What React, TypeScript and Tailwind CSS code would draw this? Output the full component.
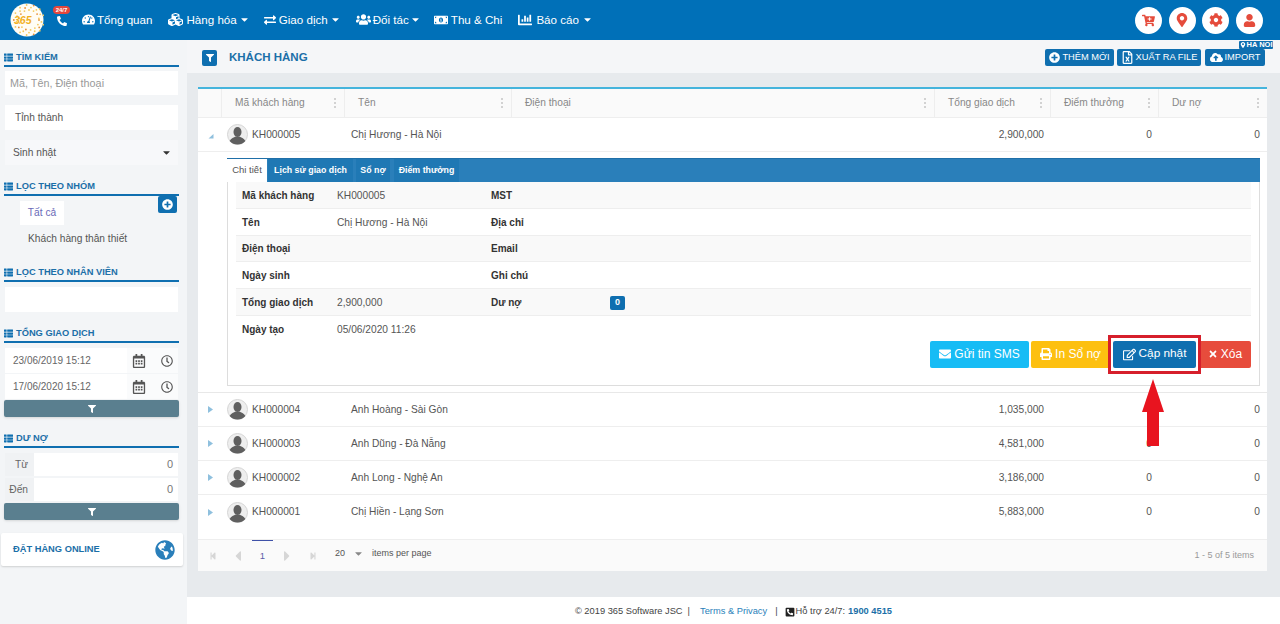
import React from 'react';
import {
  FaTachometerAlt, FaCubes, FaExchangeAlt, FaUsers, FaMoneyBillAlt, FaChartBar, FaCaretDown, FaPhoneAlt,
  FaCartPlus, FaMapMarkerAlt, FaCog, FaUser, FaFilter, FaThList, FaPlusCircle, FaRegFileExcel, FaCloudUploadAlt,
  FaRegCalendarAlt, FaRegClock, FaEnvelope, FaPrint, FaRegEdit, FaTimes, FaGlobeAmericas, FaStepBackward,
  FaCaretLeft, FaCaretRight, FaStepForward, FaPhoneSquareAlt,
} from 'react-icons/fa';

const navItems = [
  { icon: <FaTachometerAlt className="text-[13px]" />, label: 'Tổng quan', caret: false, cls: 'ml-0 gap-[2px]' },
  { icon: <FaCubes className="text-[15px]" />, label: 'Hàng hóa', caret: true, cls: 'ml-[16px] gap-[3px]' },
  { icon: <FaExchangeAlt className="text-[12px]" />, label: 'Giao dịch', caret: true, cls: 'ml-[14px] gap-[3px]' },
  { icon: <FaUsers className="text-[15px]" />, label: 'Đối tác', caret: true, cls: 'ml-[15px] gap-[2px]' },
  { icon: <FaMoneyBillAlt className="text-[14px]" />, label: 'Thu & Chi', caret: false, cls: 'ml-[13px] gap-[3px]' },
  { icon: <FaChartBar className="text-[14px]" />, label: 'Báo cáo', caret: true, cls: 'ml-[16px] gap-[4px]' },
];

const customers = [
  { code: 'KH000004', name: 'Anh Hoàng - Sài Gòn', total: '1,035,000' },
  { code: 'KH000003', name: 'Anh Dũng - Đà Nẵng', total: '4,581,000' },
  { code: 'KH000002', name: 'Anh Long - Nghệ An', total: '3,186,000' },
  { code: 'KH000001', name: 'Chị Hiền - Lạng Sơn', total: '5,883,000' },
];

const columns = ['Mã khách hàng', 'Tên', 'Điện thoại', 'Tổng giao dịch', 'Điểm thưởng', 'Dư nợ'];

const details = [
  { a: 'Mã khách hàng', b: 'KH000005', c: 'MST' },
  { a: 'Tên', b: 'Chị Hương - Hà Nội', c: 'Địa chỉ' },
  { a: 'Điện thoại', b: '', c: 'Email' },
  { a: 'Ngày sinh', b: '', c: 'Ghi chú' },
  { a: 'Tổng giao dịch', b: '2,900,000', c: 'Dư nợ', badge: true },
  { a: 'Ngày tạo', b: '05/06/2020 11:26', c: '' },
];

const gridCols = 'grid grid-cols-[24px_123px_167px_423px_116px_108px_108px]';

const Logo = () => (
  <svg width="34" height="34" viewBox="0 0 34 34">
    <circle cx="17" cy="17" r="16.5" fill="#fffdf5" />
    {Array.from({ length: 40 }).map((_, i) => {
      const a = (i / 40) * Math.PI * 2;
      const r = 10 + (i % 3) * 2.6;
      return <circle key={i} cx={19 + Math.cos(a) * r} cy={17 + Math.sin(a) * r} r="0.9" fill={i % 4 === 0 ? '#e8903a' : '#f4c95d'} />;
    })}
    <text x="4" y="21" fontSize="10.5" fontWeight="700" fontStyle="italic" fill="#f2b01e" fontFamily="Liberation Sans">365</text>
  </svg>
);

const Avatar = () => (
  <svg width="21" height="21" viewBox="0 0 21 21" className="shrink-0">
    <circle cx="10.5" cy="10.5" r="10" fill="#eeeeee" stroke="#d5d5d5" />
    <ellipse cx="10.5" cy="8" rx="4" ry="5" fill="#5f5f5f" />
    <path d="M2.6 17 C4 14 7 13.5 8.5 12.5 L12.5 12.5 C14 13.5 17 14 18.4 17 C16.5 19.5 13.5 20.5 10.5 20.5 C7.5 20.5 4.5 19.5 2.6 17 Z" fill="#5f5f5f" />
  </svg>
);

const SectionTitle = ({ title }: { title: string }) => (
  <div className="flex h-[16px] items-center gap-[3px] border-b-[2px] border-[#0f6fb0] pb-px text-[9.3px] font-bold text-[#1b6fa8]">
    <FaThList className="text-[9px] text-[#0f6fb0]" />
    <span>{title}</span>
  </div>
);

const FilterButton = () => (
  <div className="flex h-[17px] items-center justify-center rounded-[2px] bg-[#5a7f8f] text-white shadow-sm">
    <FaFilter className="text-[8px]" />
  </div>
);

const DateRow = ({ value }: { value: string }) => (
  <div className="flex h-[25px] items-center bg-white text-[10px] text-[#666]">
    <span className="flex-1 pl-[8px]">{value}</span>
    <div className="flex h-full w-[51px] items-center justify-end bg-[#fafbfc] pr-[5px]">
      <FaRegCalendarAlt className="text-[14px] text-[#555]" />
      <FaRegClock className="ml-[15px] text-[12px] text-[#555]" />
    </div>
  </div>
);

const RangeRow = ({ label }: { label: string }) => (
  <div className="flex h-[23px] items-stretch px-px text-[10.2px] text-[#666]">
    <div className="flex w-[29px] items-center justify-end bg-[#f0f2f4] pr-[6px]">{label}</div>
    <div className="flex flex-1 items-center justify-end bg-white pr-[5px] text-[11px] text-[#777]">0</div>
  </div>
);

const Sidebar = () => (
  <aside className="flex w-[187px] shrink-0 flex-col bg-[#f3f5f7]">
    <div className="flex flex-col pl-[4px] pr-[8px] pt-[11px]">
      <SectionTitle title="TÌM KIẾM" />
      <div className="mx-px mt-[4px] flex h-[24px] items-center bg-white px-[5px] text-[10.8px] text-[#999]">Mã, Tên, Điện thoại</div>
      <div className="mx-px mt-[10px] flex h-[25px] items-center bg-white pl-[10px] text-[10.2px] text-[#555]">Tỉnh thành</div>
      <div className="mx-px mt-[10px] flex h-[25px] items-center justify-between bg-[#f7f8fa] pl-[8px] pr-[6px] text-[10.2px] text-[#555]">
        <span>Sinh nhật</span>
        <FaCaretDown className="text-[11px] text-[#333]" />
      </div>

      <div className="mt-[15px]"><SectionTitle title="LỌC THEO NHÓM" /></div>
      <div className="relative h-[54px]">
        <div className="ml-[16px] mt-[5px] flex h-[24px] w-[44px] items-center justify-center bg-white text-[10.2px] text-[#6a6ab8]">Tất cả</div>
        <div className="absolute right-[2px] top-0 flex h-[17px] w-[19px] items-center justify-center rounded-[2px] bg-[#0f6fb0] text-white">
          <FaPlusCircle className="text-[11px]" />
        </div>
        <div className="ml-[24px] mt-[6px] text-[10.2px] text-[#555]">Khách hàng thân thiết</div>
      </div>

      <div className="mt-[16px]"><SectionTitle title="LỌC THEO NHÂN VIÊN" /></div>
      <div className="mx-px mt-[5px] h-[25px] bg-white" />

      <div className="mt-[15px]"><SectionTitle title="TỔNG GIAO DỊCH" /></div>
      <div className="mx-px mt-[5px] flex flex-col gap-px">
        <DateRow value="23/06/2019 15:12" />
        <DateRow value="17/06/2020 15:12" />
      </div>
      <div className="mt-px"><FilterButton /></div>

      <div className="mt-[15px]"><SectionTitle title="DƯ NỢ" /></div>
      <div className="mt-[5px] flex flex-col gap-[2px]">
        <RangeRow label="Từ" />
        <RangeRow label="Đến" />
      </div>
      <div className="mt-[2px]"><FilterButton /></div>
    </div>
    <div className="ml-px mt-[13px] flex h-[33px] w-[182px] items-center justify-between rounded-[2px] bg-white pl-[12px] pr-[8px] text-[9.3px] font-bold text-[#1b6fa8] shadow-[0_1px_2px_rgba(0,0,0,0.15)]">
      <span>ĐẶT HÀNG ONLINE</span>
      <FaGlobeAmericas className="text-[20px] text-[#2a7fba]" />
    </div>
  </aside>
);

const ActionButton = ({ icon, label, cls }: { icon: React.ReactNode; label: string; cls: string }) => (
  <div className={`flex h-[17px] items-center justify-center gap-[2px] rounded-[2px] bg-[#0f6fb0] text-[9.3px] text-white ${cls}`}>
    {icon}
    <span>{label}</span>
  </div>
);

const Detail = () => (
  <div className="border-b border-[#e8e8e8] bg-white pb-[6px] pl-[29px] pr-[7px] pt-[6px]">
    <div className="h-[228px] border-x border-b border-[#dddddd]">
      <div className="-mx-px flex h-[24px] items-end border-t border-[#1f6fa8] bg-[#2a7fba] text-[8.8px] font-bold text-white">
        <div className="flex h-[23px] w-[40px] items-center justify-center bg-white text-[9.5px] font-normal text-[#555]">Chi tiết</div>
        <div className="ml-px flex h-[23px] w-[85px] items-center justify-center bg-[#1f78b4]">Lịch sử giao dịch</div>
        <div className="ml-[3px] flex h-[23px] w-[34px] items-center justify-center bg-[#1f78b4]">Sổ nợ</div>
        <div className="ml-[4px] flex h-[23px] w-[65px] items-center justify-center bg-[#1f78b4]">Điểm thưởng</div>
      </div>
      <div className="ml-[8px] mr-[8px]">
        {details.map((d, i) => (
          <div
            key={d.a}
            className={`flex h-[26.8px] items-center border-b border-[#eeeeee] pl-[6px] pt-px text-[10.2px] text-[#555] ${i % 2 === 0 ? 'bg-[#f9f9f9]' : 'bg-white'} ${i === 5 ? 'border-b-0' : ''}`}
          >
            <div className="w-[95px] text-[10px] font-bold text-[#333]">{d.a}</div>
            <div className="w-[154px]">{d.b}</div>
            <div className="w-[119px] text-[10px] font-bold text-[#333]">{d.c}</div>
            {d.badge && (
              <div className="flex h-[14px] w-[15px] items-center justify-center rounded-[2px] bg-[#0f6fb0] text-[9px] font-bold text-white">0</div>
            )}
          </div>
        ))}
      </div>
      <div className="mr-[8px] mt-[-2px] flex justify-end text-[12px] text-white">
        <div className="flex h-[27px] w-[99px] items-center justify-center gap-[3px] rounded-[2px] bg-[#17bcf5]">
          <FaEnvelope className="text-[12px]" /><span>Gửi tin SMS</span>
        </div>
        <div className="ml-[2px] flex h-[27px] w-[79px] items-center justify-center gap-[3px] rounded-[2px] bg-[#fdc010]">
          <FaPrint className="text-[12px]" /><span>In Sổ nợ</span>
        </div>
        <div className="relative z-10 ml-[3px] flex h-[27px] w-[83px] items-center justify-center gap-[3px] rounded-[2px] bg-[#0f6fb0] text-[11.8px]">
          <FaRegEdit className="text-[13px]" /><span>Cập nhật</span>
          <div className="absolute -inset-x-[5px] -inset-y-[6px] border-[3px] border-[#d61f2b]" />
        </div>
        <div className="ml-[3px] flex h-[27px] w-[52px] items-center justify-center gap-[3px] rounded-[2px] bg-[#e74c3c]">
          <FaTimes className="text-[10px]" /><span>Xóa</span>
        </div>
      </div>
    </div>
  </div>
);

const CustomerTable = () => (
  <div className="relative flex h-[484px] flex-col overflow-hidden border-t-[2px] border-[#45b4dc] bg-white">
    <div className={`${gridCols} h-[29px] shrink-0 border-b border-[#eeeeee] bg-[#fafafa] text-[10.2px] text-[#888]`}>
      <div className="border-r border-[#eeeeee]" />
      {columns.map(c => (
        <div key={c} className="relative flex items-center border-r border-[#eeeeee] pl-[13px] last:border-r-0">
          {c}
          <div className="absolute right-[8px] top-1/2 flex -translate-y-1/2 flex-col gap-[2px]">
            <span className="h-[2px] w-[2px] rounded-full bg-[#c4c4c4]" />
            <span className="h-[2px] w-[2px] rounded-full bg-[#c4c4c4]" />
            <span className="h-[2px] w-[2px] rounded-full bg-[#c4c4c4]" />
          </div>
        </div>
      ))}
    </div>

    <div className={`${gridCols} h-[34px] shrink-0 items-center border-b border-[#eeeeee] text-[10.2px] text-[#555]`}>
      <div className="flex justify-center pl-[1px] pt-[3px]">
        <svg width="6" height="5" viewBox="0 0 6 5"><path d="M5.5 0 L5.5 4.5 L0.5 4.5 Z" fill="#8fc0de" /></svg>
      </div>
      <div className="flex items-center gap-[4px] pl-[5px]"><Avatar /><span>KH000005</span></div>
      <div className="pl-[6px]">Chị Hương - Hà Nội</div>
      <div />
      <div className="pr-[7px] text-right">2,900,000</div>
      <div className="pr-[7px] text-right">0</div>
      <div className="pr-[7px] text-right">0</div>
    </div>

    <Detail />

    {customers.map((c, i) => (
      <div key={c.code} className={`${gridCols} h-[34px] shrink-0 items-center text-[10.2px] text-[#555] ${i < 3 ? 'border-b border-[#eeeeee]' : ''}`}>
        <div className="flex justify-center">
          <svg width="5" height="7" viewBox="0 0 5 7"><path d="M0 0 L5 3.5 L0 7 Z" fill="#8fc0de" /></svg>
        </div>
        <div className="flex items-center gap-[4px] pl-[5px]"><Avatar /><span>{c.code}</span></div>
        <div className="pl-[6px]">{c.name}</div>
        <div />
        <div className="pr-[7px] text-right">{c.total}</div>
        <div className="pr-[7px] text-right">{i === 0 ? '' : '0'}</div>
        <div className="pr-[7px] text-right">0</div>
      </div>
    ))}

    <div className="mt-auto flex h-[32px] shrink-0 items-center border-t border-[#eeeeee] bg-[#fafafa] pl-[11px] pr-[13px] text-[#d6d6d6]">
      <FaStepBackward className="text-[8px]" />
      <FaCaretLeft className="ml-[13px] text-[16px]" />
      <div className="ml-[6px] flex h-[32px] w-[21px] items-center justify-center border-t border-[#3f51a8] text-[9.5px] text-[#5d5da8]">1</div>
      <FaCaretRight className="ml-[6px] text-[16px]" />
      <FaStepForward className="ml-[14px] text-[8px]" />
      <span className="mb-[4px] ml-[18px] text-[9px] text-[#555]">20</span>
      <FaCaretDown className="mb-[4px] ml-[8px] text-[11px] text-[#888]" />
      <span className="mb-[4px] ml-[8px] text-[9px] text-[#555]">items per page</span>
      <span className="ml-auto text-[9px] text-[#999]">1 - 5 of 5 items</span>
    </div>
  </div>
);

const RedArrow = () => (
  <svg width="24" height="68" viewBox="0 0 24 68" className="absolute left-[1141px] top-[379px] z-20">
    <path d="M12 0 L23 33 L18 33 L18 67 L6 67 L6 33 L1 33 Z" fill="#e8141f" />
  </svg>
);

export default function App() {
  return (
    <div className="relative flex h-[624px] w-[1280px] flex-col overflow-hidden bg-[#f3f5f7] font-['Liberation_Sans',Arial,sans-serif]">
      <header className="flex h-[40px] shrink-0 items-center bg-[#0070b8] pl-[10px] pr-[17px] text-white">
        <Logo />
        <div className="relative ml-[9px] mr-[12px] flex h-[40px] w-[17px] items-center justify-center pt-[2px]">
          <FaPhoneAlt className="text-[10px]" />
          <span className="absolute left-0 top-[6px] w-[17px] rounded-full bg-[#e4473c] text-center text-[6px] font-bold leading-[8px]">24/7</span>
        </div>
        {navItems.map(item => (
          <div key={item.label} className={`flex items-center text-[11.6px] ${item.cls}`}>
            {item.icon}
            <span>{item.label}</span>
            {item.caret && <FaCaretDown className="-ml-px text-[11px]" />}
          </div>
        ))}
        <div className="ml-auto flex gap-[6.6px] text-[#e54c3c]">
          <div className="flex h-[27px] w-[27px] items-center justify-center rounded-full bg-white"><FaCartPlus className="text-[13px]" /></div>
          <div className="flex h-[27px] w-[27px] items-center justify-center rounded-full bg-white"><FaMapMarkerAlt className="text-[14px]" /></div>
          <div className="flex h-[27px] w-[27px] items-center justify-center rounded-full bg-white"><FaCog className="text-[14px]" /></div>
          <div className="flex h-[27px] w-[27px] items-center justify-center rounded-full bg-white"><FaUser className="text-[13px]" /></div>
        </div>
      </header>

      <div className="flex min-h-0 flex-1">
        <Sidebar />
        <div className="flex min-w-0 flex-1 flex-col bg-[#e7eaed]">
          <div className="relative flex h-[33px] shrink-0 items-center bg-[#f5f6f8] pl-[15px] pr-[15px] pt-[2px]">
            <div className="flex h-[16px] w-[15px] items-center justify-center rounded-[2px] bg-[#0f6fb0] text-white">
              <FaFilter className="text-[8px]" />
            </div>
            <span className="ml-[12px] text-[11.5px] font-bold text-[#1b6fa8]">KHÁCH HÀNG</span>
            <div className="ml-auto flex">
              <ActionButton cls="w-[69px]" icon={<FaPlusCircle className="text-[11px]" />} label="THÊM MỚI" />
              <ActionButton cls="ml-[3px] w-[84px]" icon={<FaRegFileExcel className="text-[13px]" />} label="XUẤT RA FILE" />
              <ActionButton cls="ml-[4px] w-[60px]" icon={<FaCloudUploadAlt className="text-[13px]" />} label="IMPORT" />
            </div>
            <div className="absolute right-[7px] top-[1px] flex h-[8px] w-[34px] items-center justify-center gap-px rounded-[1px] bg-[#0f6fb0] text-[7.5px] font-bold text-white">
              <FaMapMarkerAlt className="text-[6px]" />HA NOI
            </div>
          </div>
          <div className="flex-1 pl-[11px] pr-[13px] pt-[14px]">
            <CustomerTable />
          </div>
          <footer className="flex h-[27px] shrink-0 items-center justify-center bg-white pt-[2px] text-[9.3px] text-[#444]">
            <span>© 2019 365 Software JSC</span>
            <span className="ml-[5px]">|</span>
            <span className="ml-[10px] text-[#2a7fba]">Terms & Privacy</span>
            <span className="ml-[8px]">|</span>
            <FaPhoneSquareAlt className="ml-[7px] text-[10px] text-[#222]" />
            <span className="ml-px">Hỗ trợ 24/7:</span>
            <span className="ml-[3px] font-bold text-[#1b6fa8]">1900 4515</span>
          </footer>
        </div>
      </div>
      <RedArrow />
    </div>
  );
}
